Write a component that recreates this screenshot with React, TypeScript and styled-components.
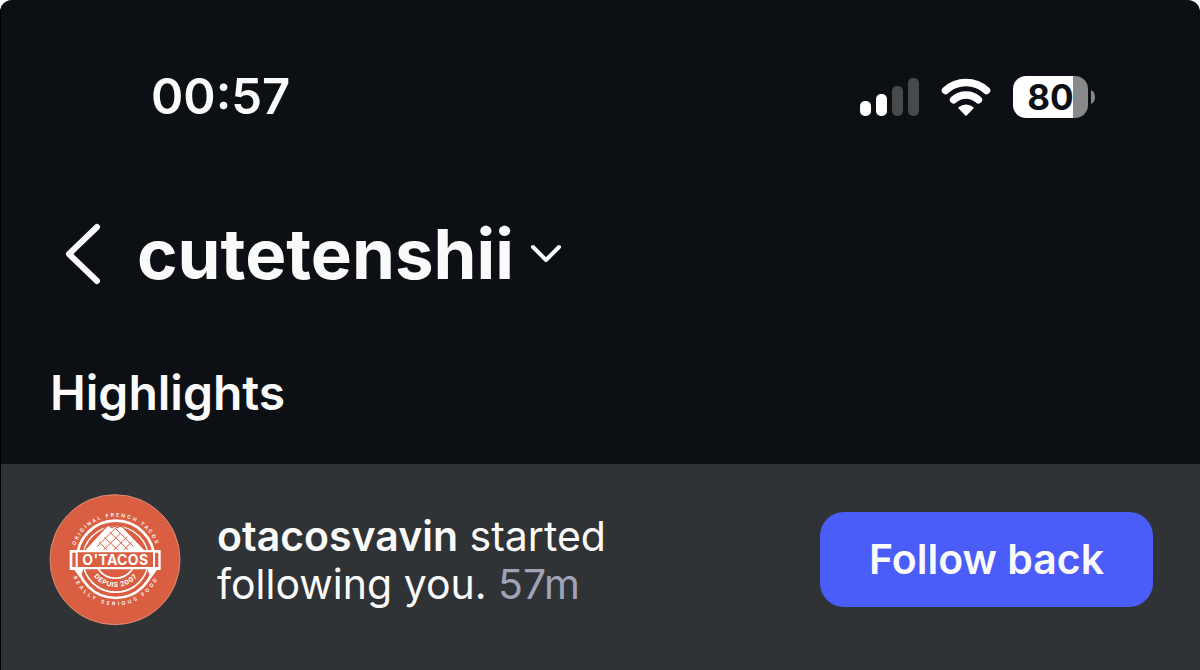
import React from "react";
import styled, { createGlobalStyle } from "styled-components";

const GlobalStyle = createGlobalStyle`
  * { box-sizing: border-box; }
  html, body { margin: 0; background: #ffffff; }
  button { font: inherit; color: inherit; background: none; border: 0; padding: 0; cursor: pointer; }
`;

const Screen = styled.main`
  display: flex;
  flex-direction: column;
  min-height: 100vh;
  overflow: hidden;
  border-radius: 12px 12px 0 0;
  border-left: 1px solid #000000;
  background: #0c1014;
  color: #fafafa;
  font-family: Inter, "Liberation Sans", sans-serif;
`;

const StatusBar = styled.div`
  display: flex;
  align-items: center;
  justify-content: space-between;
  padding: 67px 105px 0 150px;
`;

const Clock = styled.time`
  font-size: 49px;
  line-height: 60px;
  font-weight: 600;
`;

const StatusIcons = styled.div`
  display: flex;
  align-items: center;
  gap: 22px;
`;

const Battery = styled.div`
  display: flex;
  align-items: center;
  gap: 3px;
`;

const BatteryBody = styled.div`
  display: flex;
  align-items: center;
  justify-content: center;
  width: 75px;
  height: 42px;
  border-radius: 13px;
  background: linear-gradient(to right, #ffffff 80%, #88898b 80%);
  color: #0c1014;
  font-size: 35px;
  line-height: 42px;
  font-weight: 700;
`;

const Header = styled.header`
  display: flex;
  align-items: center;
  gap: 36px;
  padding: 82px 62px 0;
`;

const BackButton = styled.button`
  display: flex;
`;

const AccountButton = styled.button`
  display: flex;
  align-items: center;
  gap: 16px;
`;

const AccountName = styled.h1`
  margin: 0;
  font-size: 69px;
  line-height: 90px;
  font-weight: 700;
`;

const SectionTitle = styled.h2`
  margin: 0;
  padding: 64px 49px 41px;
  font-size: 48px;
  line-height: 60px;
  font-weight: 600;
`;

const Notification = styled.article`
  display: flex;
  flex: 1;
  align-items: flex-start;
  padding: 30px 47px 43px 48px;
  background: #303335;
`;

const Message = styled.p`
  flex: 1;
  margin: 0;
  padding: 18px 36px 0;
  font-size: 41px;
  line-height: 48px;
`;

const UserLink = styled.a`
  color: inherit;
  font-weight: 600;
  text-decoration: none;
`;

const Age = styled.time`
  color: #a0a3b5;
`;

const FollowButton = styled.button`
  && {
    margin-top: 18px;
    padding: 0 49px;
    border-radius: 24px;
    background: #4a5df9;
    font-size: 41px;
    line-height: 95px;
    font-weight: 600;
    white-space: nowrap;
  }
`;

function Signal() {
  return (
    <svg width="59" height="38" viewBox="0 0 59 38" role="img" aria-label="Signal">
      <rect x="0" y="23" width="11" height="15" rx="5" fill="#fff" />
      <rect x="16" y="16" width="11" height="22" rx="5" fill="#fff" />
      <rect x="32" y="8" width="11" height="30" rx="5" fill="#48494b" />
      <rect x="48" y="0" width="11" height="38" rx="5" fill="#48494b" />
    </svg>
  );
}

function Wifi() {
  return (
    <svg width="50" height="38" viewBox="0 0 50 38" fill="none" stroke="#fff" strokeWidth="7.5" role="img" aria-label="Wi-Fi">
      <path d="M4.5 12.5a30.5 30.5 0 0 1 41 0" strokeLinecap="round" />
      <path d="M12.6 21.8a18.5 18.5 0 0 1 24.8 0" strokeLinecap="round" />
      <path d="M18.7 30a10 10 0 0 1 12.6 0L25 36.5Z" fill="#fff" strokeWidth="2.5" strokeLinejoin="round" />
    </svg>
  );
}

function Avatar() {
  return (
    <svg width="132" height="132" viewBox="26 26 396 396" role="img" aria-label="O'Tacos" fontFamily="Inter, sans-serif" fill="#fff">
      <defs>
        <path id="arc-top" d="M98 222a128 128 0 0 1 256 0" />
        <path id="arc-bottom" d="M88 222a138 138 0 0 0 276 0" />
        <path id="arc-year" d="M143 222a83 83 0 0 0 166 0" />
        <clipPath id="shell"><path d="M132 200 204 124l10 -3 8 5 8 -5 12 4L316 200Z" /></clipPath>
      </defs>
      <circle cx="224" cy="223" r="195" fill="#da5f42" stroke="#df8c76" strokeWidth="3" />
      <g fill="none" stroke="#fff">
        <circle cx="226" cy="222" r="116" strokeWidth="8" />
        <circle cx="226" cy="222" r="99" strokeWidth="4" />
      </g>
      <path d="M126 202 198 124q4 -5 10 -2l7 5 8 -5 8 5 8 -5q5 0 9 4L322 202Z" stroke="#da5f42" strokeWidth="4" />
      <g clipPath="url(#shell)" stroke="#da5f42" strokeWidth="3" fill="none">
        <path d="M170 184 226 128M182 202 242 142M204 210 260 154M232 212 274 170M280 184 224 128M272 202 208 140M250 210 192 156M218 212 176 170" />
      </g>
      <path d="M88 194H361V254H350L332 278L322 254H128L120 278L102 254H88Z" />
      <path d="M96 202h10v43H96ZM344 202h10v43h-10ZM112 201h226v44H112Z" fill="#da5f42" />
      <path d="M128 252h196l-24 36q-74 60 -148 0Z" fill="#da5f42" />
      <g fill="none" stroke="#fff">
        <path d="M132 252a99 99 0 0 0 188 0" strokeWidth="4" />
        <path d="M174 252a62 62 0 0 0 102 0" strokeWidth="5" />
      </g>
      <text x="225" y="238" textAnchor="middle" fontSize="42" fontWeight="700" letterSpacing="1">O'TACOS</text>
      <text fontSize="20" fontWeight="700" textAnchor="middle" letterSpacing="2"><textPath href="#arc-year" startOffset="50%">DEPUIS 2007</textPath></text>
      <text fontSize="15" fontWeight="600" textAnchor="middle" letterSpacing="6"><textPath href="#arc-top" startOffset="50%">ORIGINAL FRENCH TACOS</textPath></text>
      <text fontSize="15" fontWeight="600" textAnchor="middle" letterSpacing="8"><textPath href="#arc-bottom" startOffset="50%">REALLY SERIOUS FOOD</textPath></text>
    </svg>
  );
}

export default function App() {
  return (
    <>
      <GlobalStyle />
      <Screen>
        <StatusBar>
          <Clock>00:57</Clock>
          <StatusIcons>
            <Signal />
            <Wifi />
            <Battery>
              <BatteryBody>80</BatteryBody>
              <svg width="4" height="14" viewBox="0 0 4 14" aria-hidden="true">
                <path d="M0 0q4 2 4 7t-4 7Z" fill="#88898b" />
              </svg>
            </Battery>
          </StatusIcons>
        </StatusBar>
        <Header>
          <BackButton aria-label="Back">
            <svg width="38" height="62" viewBox="0 0 38 62" fill="none" stroke="#fafafa" strokeWidth="6" strokeLinecap="round" strokeLinejoin="round">
              <path d="M34 4 6 31 34 58" />
            </svg>
          </BackButton>
          <AccountButton>
            <AccountName>cutetenshii</AccountName>
            <svg width="32" height="20" viewBox="0 0 32 20" fill="none" stroke="#fafafa" strokeWidth="4" strokeLinecap="round" strokeLinejoin="round" aria-hidden="true">
              <path d="M3 3 16 16 29 3" />
            </svg>
          </AccountButton>
        </Header>
        <SectionTitle>Highlights</SectionTitle>
        <Notification>
          <Avatar />
          <Message>
            <UserLink href="#otacosvavin">otacosvavin</UserLink> started
            <br />
            following you. <Age>57m</Age>
          </Message>
          <FollowButton>Follow back</FollowButton>
        </Notification>
      </Screen>
    </>
  );
}
